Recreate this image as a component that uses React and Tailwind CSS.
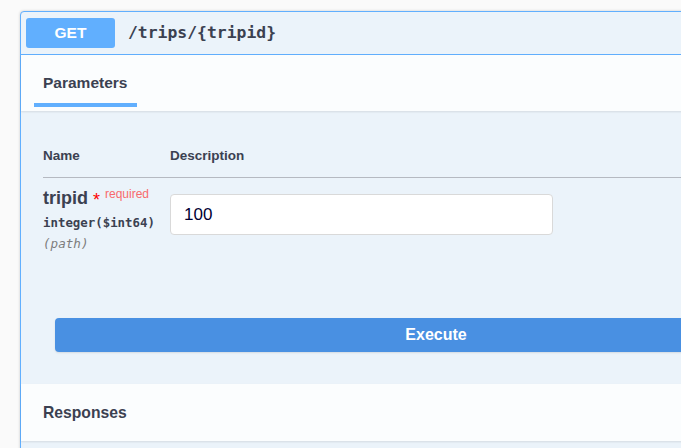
export default function App() {
  const sans = { fontFamily: '"Liberation Sans", Arial, sans-serif' };
  return (
    <div className="w-[681px] h-[448px] overflow-hidden bg-[#fafafa] pt-[11px] pl-[20px] text-[#3b4151]" style={sans}>
      <div className="w-[832px] border border-[#61affe] rounded-[4px] bg-[#ebf3fa] shadow-[0_0_3px_rgba(0,0,0,0.19)]">
        {/* Summary */}
        <div className="h-[43px] flex items-start pt-[6px] pl-[5px] border-b border-[#61affe]">
          <div className="w-[89px] h-[30px] rounded-[3px] bg-[#61affe] text-white font-bold text-[15.5px] flex items-center justify-center">
            GET
          </div>
          <div
            className="ml-[13px] h-[30px] flex items-center text-[16.4px] font-bold text-[#3b4151]"
            style={{ fontFamily: '"DejaVu Sans Mono", "Liberation Mono", monospace' }}
          >
            /trips/{"{tripid}"}
          </div>
        </div>

        {/* Parameters header */}
        <div className="h-[56px] bg-[#fbfdfe] shadow-[0_1px_2px_rgba(0,0,0,0.1)] pl-[13px] pt-[18px] relative">
          <div className="w-[103px] flex flex-col">
            <div className="h-[20px] leading-[20px] pl-[9px] text-[15.5px] font-bold">Parameters</div>
            <div className="mt-[10px] h-[4px] bg-[#61affe]"></div>
          </div>
        </div>

        {/* Body */}
        <div className="pt-[35px]">
          <div className="ml-[22px] flex pb-[11px] border-b border-[#b5b9c1] text-[13.5px] font-bold leading-[20px]">
            <div className="w-[127px]">Name</div>
            <div>Description</div>
          </div>
          <div className="ml-[22px] flex">
            <div className="w-[127px] pt-[9px]">
              <div className="h-[22px] leading-[22px] flex items-start">
                <span className="text-[18px] font-bold">tripid</span>
                <span className="ml-[5px] text-[18px] text-[#ff0000] leading-[26px]">*</span>
                <span className="ml-[5px] text-[12px] text-[#f86a6d] leading-[12px] mt-[1px]">required</span>
              </div>
              <div
                className="mt-[7px] h-[14px] leading-[14px] text-[12.4px] font-bold"
                style={{ fontFamily: '"DejaVu Sans Mono", "Liberation Mono", monospace' }}
              >
                integer($int64)
              </div>
              <div
                className="mt-[7px] h-[14px] leading-[14px] text-[12.6px] italic text-[#7d7d7d]"
                style={{ fontFamily: '"DejaVu Sans Mono", "Liberation Mono", monospace' }}
              >
                (path)
              </div>
            </div>
            <div className="pt-[16px]">
              <div className="w-[383px] h-[41px] bg-white border border-[#d9d9d9] rounded-[4px] flex items-center pl-[13px] text-[17px] text-[#000033]">
                100
              </div>
            </div>
          </div>

          <div className="mt-[67px] px-[34px] pb-[32px]">
            <div className="h-[34px] rounded-[4px] bg-[#4990e2] text-white font-bold text-[16px] flex items-center justify-center shadow-[0_1px_2px_rgba(0,0,0,0.1)]">
              Execute
            </div>
          </div>

          <div className="h-[57px] bg-[#fbfdfe] shadow-[0_1px_2px_rgba(0,0,0,0.1)] pl-[22px] flex items-center">
            <div className="text-[15.7px] font-bold">Responses</div>
          </div>
          <div className="h-[40px]"></div>
        </div>
      </div>
    </div>
  );
}
